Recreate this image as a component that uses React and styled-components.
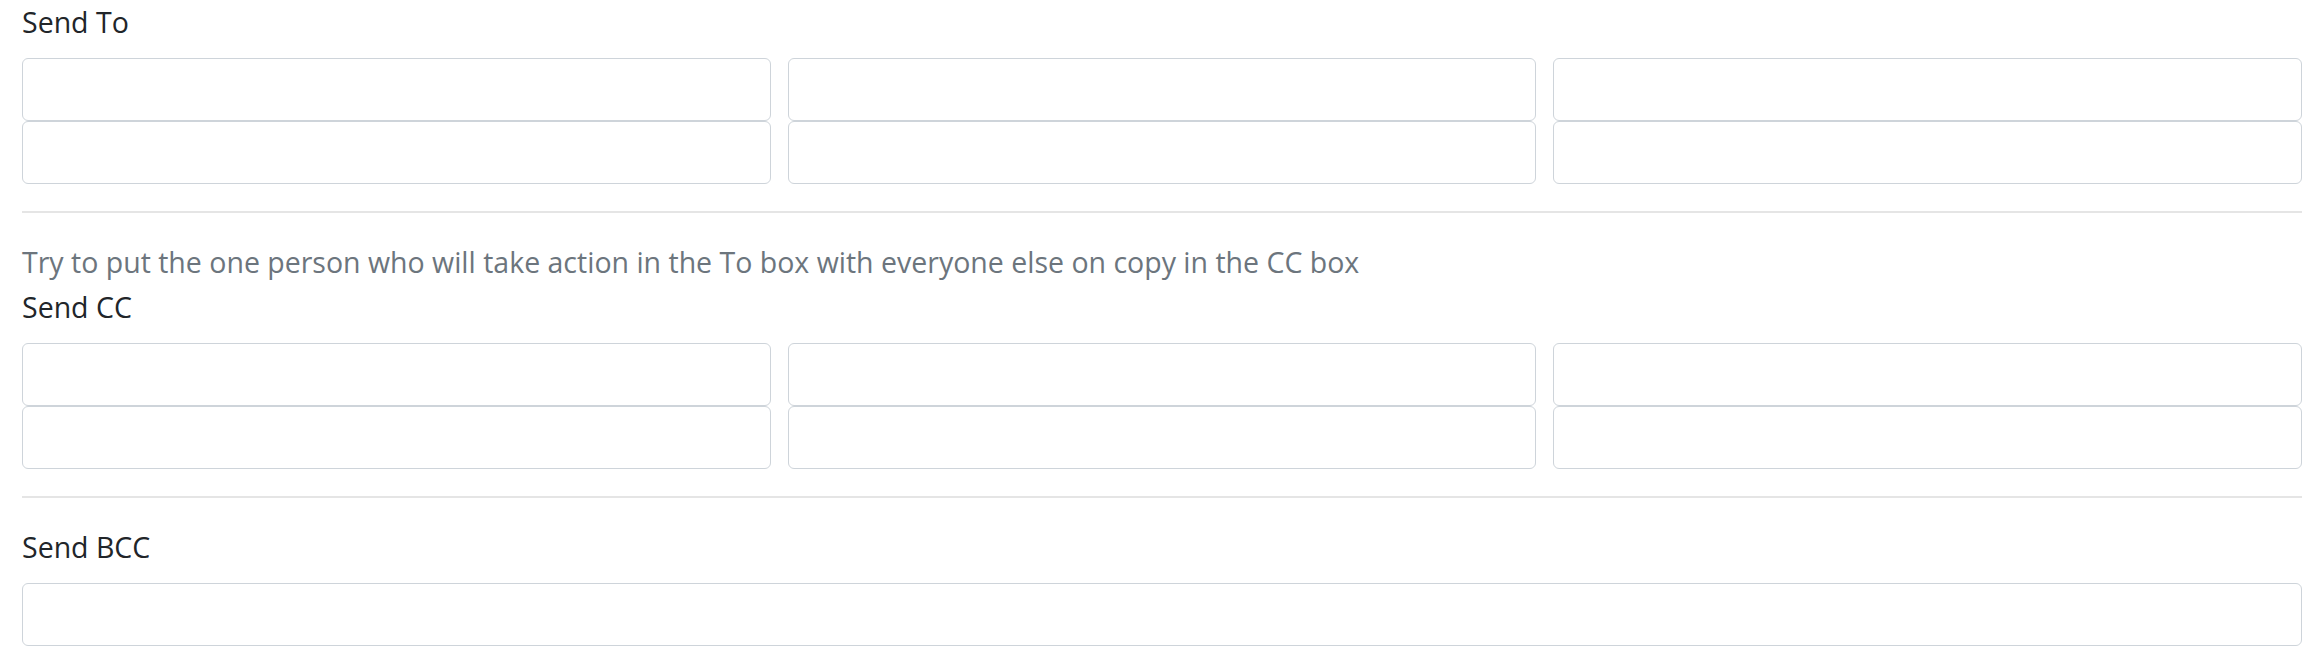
import styled, { createGlobalStyle } from "styled-components";

const GlobalStyle = createGlobalStyle`
  html, body {
    margin: 0;
    padding: 0;
    background: #fff;
  }
  body {
    font-family: "Open Sans", "Noto Sans", "Liberation Sans", sans-serif;
    font-size: 28.5px;
    line-height: 45px;
    color: #212529;
  }
`;

const Page = styled.div`
  padding: 0 14px 0 22px;
`;

const Group = styled.div`
  display: flex;
  flex-direction: column;
`;

const Label = styled.label`
  display: block;
  margin-bottom: 13px;
  color: #212529;
`;

const Help = styled.small`
  display: block;
  font-size: 28.5px;
  color: #6c757d;
`;

const Grid = styled.div`
  display: grid;
  grid-template-columns: repeat(${(p) => p.cols || 1}, 1fr);
  column-gap: 17px;
`;

const Column = styled.div`
  display: flex;
  flex-direction: column;
`;

const Input = styled.input`
  box-sizing: border-box;
  display: block;
  width: 100%;
  height: 63px;
  margin: 0;
  padding: 0 18px;
  font: inherit;
  color: #495057;
  background: #fff;
  border: 1px solid #ced4da;
  border-radius: 6px;
  outline: none;
`;

const Divider = styled.hr`
  margin: 27px 0;
  border: 0;
  border-top: 2px solid rgba(0, 0, 0, 0.1);
`;

function InputColumns({ name }) {
  return (
    <Grid cols={3}>
      {[0, 1, 2].map((c) => (
        <Column key={c}>
          <Input name={`${name}${c * 2}`} />
          <Input name={`${name}${c * 2 + 1}`} />
        </Column>
      ))}
    </Grid>
  );
}

export default function App() {
  return (
    <>
      <GlobalStyle />
      <Page>
        <Group>
          <Label>Send To</Label>
          <InputColumns name="to" />
        </Group>

        <Divider />

        <Group>
          <Help>
            Try to put the one person who will take action in the To box with
            everyone else on copy in the CC box
          </Help>
          <Label>Send CC</Label>
          <InputColumns name="cc" />
        </Group>

        <Divider />

        <Group>
          <Label>Send BCC</Label>
          <Input name="bcc" />
        </Group>
      </Page>
    </>
  );
}
